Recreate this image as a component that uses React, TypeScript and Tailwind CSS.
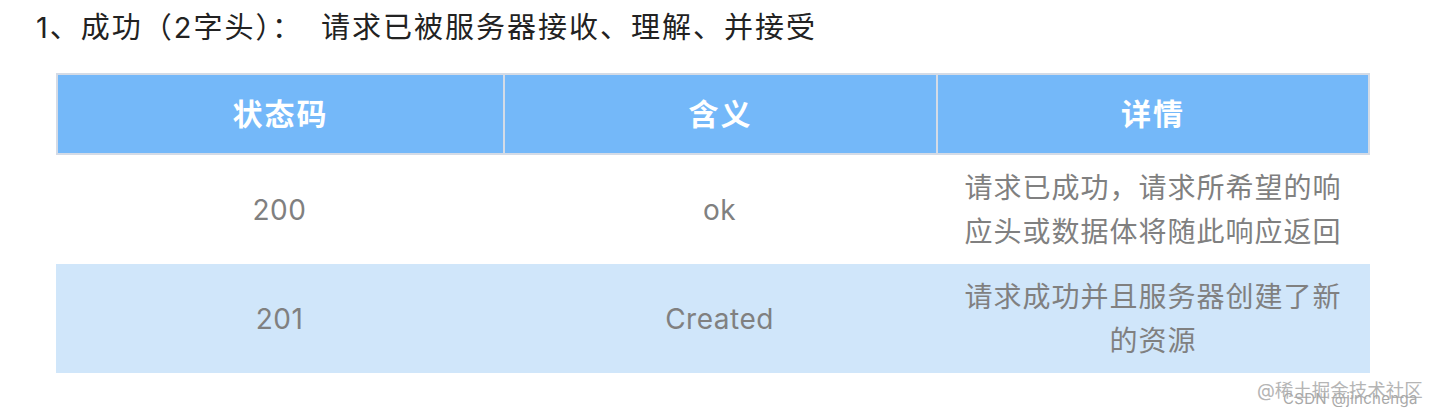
export default function App() {
  const font = { fontFamily: 'Inter, "Noto Sans CJK SC", sans-serif' };
  return (
    <div className="relative w-[1432px] h-[416px] bg-white overflow-hidden" style={font}>
      <div className="pl-[36px] pt-[9px] text-[29px] leading-[38px] tracking-[2px] text-[#222]">
        1、成功（2字头）：<span className="ml-[18px]">请求已被服务器接收、理解、并接受</span>
      </div>
      <div className="ml-[56px] mt-[26px] w-[1314px]">
        <div className="grid grid-cols-[447px_433px_1fr] h-[82px] border-2 border-[#d4dbe6] bg-[#74b8f9] text-white font-bold text-[30px] tracking-[2px]">
          <div className="flex items-center justify-center border-r-2 border-[#d4dbe6]">状态码</div>
          <div className="flex items-center justify-center border-r-2 border-[#d4dbe6]">含义</div>
          <div className="flex items-center justify-center">详情</div>
        </div>
        <div className="grid grid-cols-[447px_433px_1fr] h-[109px] bg-white text-[#808080] text-[28px] leading-[44px] tracking-[0.5px]">
          <div className="flex items-center justify-center">200</div>
          <div className="flex items-center justify-center">ok</div>
          <div className="flex items-center justify-center px-[20px] text-center tracking-[1px]">请求已成功，请求所希望的响应头或数据体将随此响应返回</div>
        </div>
        <div className="grid grid-cols-[447px_433px_1fr] h-[109px] bg-[#d0e6fa] text-[#808080] text-[28px] leading-[44px] tracking-[0.5px]">
          <div className="flex items-center justify-center">201</div>
          <div className="flex items-center justify-center">Created</div>
          <div className="flex items-center justify-center px-[20px] text-center tracking-[1px]">请求成功并且服务器创建了新的资源</div>
        </div>
      </div>
      <div className="absolute left-[1257px] top-[378px] text-[18.5px] leading-[24px] text-[#b5b5b5]">@稀土掘金技术社区</div>
      <div className="absolute left-[1283px] top-[390px] text-[15px] leading-[18px] tracking-[0.3px] text-[#a8a8a8]">CSDN @jinchenga</div>
    </div>
  );
}
